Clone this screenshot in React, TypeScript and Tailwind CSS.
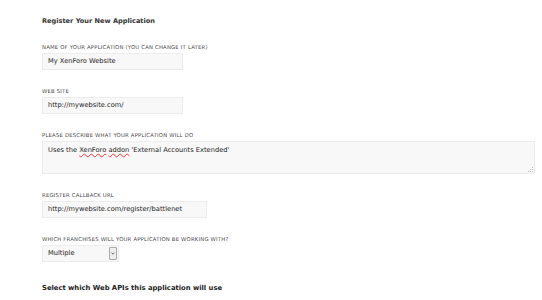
import React from 'react';

const Label: React.FC<{ children: React.ReactNode }> = ({ children }) => (
  <div className="text-[5.3px] leading-[8px] uppercase tracking-[0.2px] text-[#4a4a4a]">{children}</div>
);

const Field: React.FC<{ value: string; width: string }> = ({ value, width }) => (
  <div className={`${width} h-[17px] mt-[2px] flex items-center px-[5px] bg-[#f8f8f8] border border-[#ececec] text-[6.7px] text-[#222]`}>
    {value}
  </div>
);

const App: React.FC = () => {
  return (
    <div className="w-[542px] h-[300px] bg-white font-['DejaVu_Sans',sans-serif] pl-[42px] pt-[16px] overflow-hidden">
      <h2 className="text-[6.6px] leading-[10px] font-bold text-[#333]">Register Your New Application</h2>

      <div className="mt-[17px]">
        <Label>Name of your application (you can change it later)</Label>
        <Field value="My XenForo Website" width="w-[141px]" />
      </div>

      <div className="mt-[17px]">
        <Label>Web site</Label>
        <Field value="http://mywebsite.com/" width="w-[141px]" />
      </div>

      <div className="mt-[17px]">
        <Label>Please describe what your application will do</Label>
        <div className="relative w-[493px] h-[33px] mt-[2px] px-[5px] pt-[3px] bg-[#f8f8f8] border border-[#ececec] text-[6.7px] text-[#222]">
          Uses the{' '}
          <span className="underline decoration-wavy decoration-red-500 decoration-[0.5px] underline-offset-1">XenForo</span>{' '}
          <span className="underline decoration-wavy decoration-red-500 decoration-[0.5px] underline-offset-1">addon</span>{' '}
          'External Accounts Extended'
          <svg className="absolute right-[1px] bottom-[1px]" width="5" height="5" viewBox="0 0 5 5">
            <rect x="4" y="0" width="1" height="1" fill="#bbb" />
            <rect x="2" y="2" width="1" height="1" fill="#bbb" />
            <rect x="4" y="2" width="1" height="1" fill="#bbb" />
            <rect x="0" y="4" width="1" height="1" fill="#bbb" />
            <rect x="2" y="4" width="1" height="1" fill="#bbb" />
            <rect x="4" y="4" width="1" height="1" fill="#bbb" />
          </svg>
        </div>
      </div>

      <div className="mt-[17px]">
        <Label>Register callback URL</Label>
        <Field value="http://mywebsite.com/register/battlenet" width="w-[165px]" />
      </div>

      <div className="mt-[17px]">
        <Label>Which franchises will your application be working with?</Label>
        <div className="w-[77px] h-[17px] mt-[2px] flex items-center justify-between pl-[5px] pr-[1px] bg-[#f8f8f8] border border-[#ececec] text-[6.7px] text-[#222]">
          <span>Multiple</span>
          <span className="w-[8px] h-[13px] flex items-center justify-center border border-[#aaa] bg-[#eee] rounded-[1px]">
            <svg width="4" height="3" viewBox="0 0 4 3">
              <path d="M0.5 0.8 L2 2.2 L3.5 0.8" stroke="#444" strokeWidth="0.8" fill="none" />
            </svg>
          </span>
        </div>
      </div>

      <h2 className="mt-[21px] text-[6.8px] leading-[10px] font-bold text-[#222]">Select which Web APIs this application will use</h2>
    </div>
  );
};

export default App;
